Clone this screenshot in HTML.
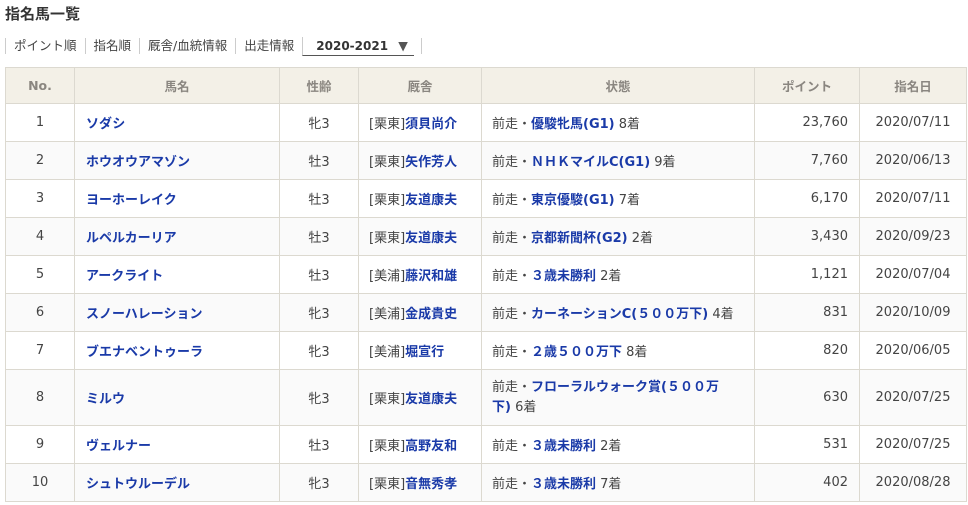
<!DOCTYPE html>
<html><head><meta charset="utf-8"><style>
body{margin:0;background:#fff;font-family:"DejaVu Sans","Noto Sans CJK JP",sans-serif;color:#444;font-size:13px;}
h1{position:absolute;left:5px;top:3px;margin:0;font-size:15px;font-weight:bold;color:#333;}
.nav{position:absolute;left:5px;top:36px;height:20px;display:flex;align-items:center;}
.nav span{border-left:1px solid #ccc;padding:0 8px;line-height:16px;font-size:12.5px;color:#444;}
.nav span.sel{font-weight:bold;color:#333;border-bottom:1px solid #555;padding:0 6px 0 13px;line-height:18px;font-size:12px;}
.nav span.end{padding:0;height:16px;}
table{position:absolute;left:5px;top:67px;border-collapse:collapse;width:961px;table-layout:fixed;}
td,th{border:1px solid #dcd9d0;height:37px;padding:0;font-size:13px;}
th{background:#f3f0e7;color:#8a8680;font-weight:bold;height:35px;font-size:12.5px;}
tr:nth-child(odd) td{background:#fafafa;}
td.c{text-align:center;}
td.r{text-align:right;padding-right:11px;}
td.l{padding-left:10px;}
a{color:#1a3aa8;font-weight:bold;text-decoration:none;}
td.n{padding-left:11px;}
</style></head><body>
<h1>指名馬一覧</h1>
<div class="nav"><span>ポイント順</span><span>指名順</span><span>厩舎/血統情報</span><span>出走情報</span><span class="sel">2020-2021 <span style="border:0;padding:0 0 0 6px;color:#555">▼</span></span><span class="end" style="margin-left:7px"></span></div>
<table>
<colgroup><col style="width:69px"><col style="width:205px"><col style="width:79px"><col style="width:123px"><col style="width:273px"><col style="width:105px"><col style="width:107px"></colgroup>
<tr><th>No.</th><th>馬名</th><th>性齢</th><th>厩舎</th><th>状態</th><th>ポイント</th><th>指名日</th></tr>
<tr><td class="c">1</td><td class="n"><a>ソダシ</a></td><td class="c">牝3</td><td class="l">[栗東]<a>須貝尚介</a></td><td class="l">前走・<a>優駿牝馬(G1)</a> 8着</td><td class="r">23,760</td><td class="c">2020/07/11</td></tr>
<tr><td class="c">2</td><td class="n"><a>ホウオウアマゾン</a></td><td class="c">牡3</td><td class="l">[栗東]<a>矢作芳人</a></td><td class="l">前走・<a>ＮＨＫマイルC(G1)</a> 9着</td><td class="r">7,760</td><td class="c">2020/06/13</td></tr>
<tr><td class="c">3</td><td class="n"><a>ヨーホーレイク</a></td><td class="c">牡3</td><td class="l">[栗東]<a>友道康夫</a></td><td class="l">前走・<a>東京優駿(G1)</a> 7着</td><td class="r">6,170</td><td class="c">2020/07/11</td></tr>
<tr><td class="c">4</td><td class="n"><a>ルペルカーリア</a></td><td class="c">牡3</td><td class="l">[栗東]<a>友道康夫</a></td><td class="l">前走・<a>京都新聞杯(G2)</a> 2着</td><td class="r">3,430</td><td class="c">2020/09/23</td></tr>
<tr><td class="c">5</td><td class="n"><a>アークライト</a></td><td class="c">牡3</td><td class="l">[美浦]<a>藤沢和雄</a></td><td class="l">前走・<a>３歳未勝利</a> 2着</td><td class="r">1,121</td><td class="c">2020/07/04</td></tr>
<tr><td class="c">6</td><td class="n"><a>スノーハレーション</a></td><td class="c">牝3</td><td class="l">[美浦]<a>金成貴史</a></td><td class="l">前走・<a>カーネーションC(５００万下)</a> 4着</td><td class="r">831</td><td class="c">2020/10/09</td></tr>
<tr><td class="c">7</td><td class="n"><a>ブエナベントゥーラ</a></td><td class="c">牝3</td><td class="l">[美浦]<a>堀宣行</a></td><td class="l">前走・<a>２歳５００万下</a> 8着</td><td class="r">820</td><td class="c">2020/06/05</td></tr>
<tr><td class="c" style="height:55px">8</td><td class="n"><a>ミルウ</a></td><td class="c">牝3</td><td class="l">[栗東]<a>友道康夫</a></td><td class="l" style="line-height:20px">前走・<a>フローラルウォーク賞(５００万<br>下)</a> 6着</td><td class="r">630</td><td class="c">2020/07/25</td></tr>
<tr><td class="c">9</td><td class="n"><a>ヴェルナー</a></td><td class="c">牡3</td><td class="l">[栗東]<a>高野友和</a></td><td class="l">前走・<a>３歳未勝利</a> 2着</td><td class="r">531</td><td class="c">2020/07/25</td></tr>
<tr><td class="c">10</td><td class="n"><a>シュトウルーデル</a></td><td class="c">牝3</td><td class="l">[栗東]<a>音無秀孝</a></td><td class="l">前走・<a>３歳未勝利</a> 7着</td><td class="r">402</td><td class="c">2020/08/28</td></tr>
</table>
</body></html>
